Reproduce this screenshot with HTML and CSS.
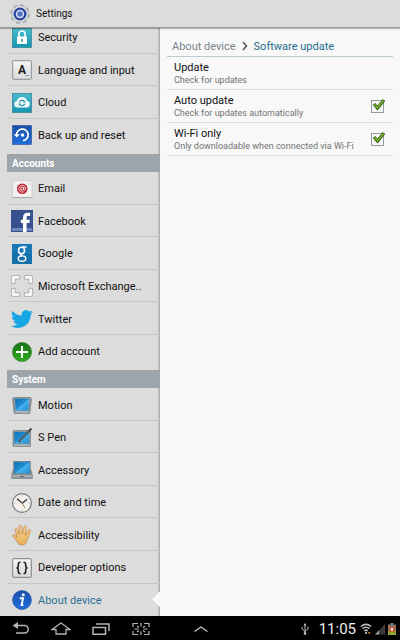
FILE: index.html
```html
<!DOCTYPE html>
<html lang="en">
<head>
    <meta charset="UTF-8">
    <meta name="viewport" content="width=device-width, initial-scale=1.0">
    <title>Settings</title>
    <link rel="stylesheet" href="styles.css">
</head>
<body>
    <!-- shared gradients -->
    <svg class="defs" aria-hidden="true">
        <defs>
            <linearGradient id="teal" x1="0" y1="0" x2="0" y2="1"><stop offset="0" stop-color="#45bccb"/><stop offset="1" stop-color="#1594b2"/></linearGradient>
            <linearGradient id="blue" x1="0" y1="0" x2="0" y2="1"><stop offset="0" stop-color="#1c50ad"/><stop offset="1" stop-color="#1f6ddb"/></linearGradient>
            <linearGradient id="screen" x1="0" y1="0" x2="1" y2="1"><stop offset="0" stop-color="#1272b5"/><stop offset="0.5" stop-color="#208fd4"/><stop offset="0.52" stop-color="#48b2ec"/><stop offset="1" stop-color="#1b8ed6"/></linearGradient>
            <linearGradient id="metal" x1="0" y1="0" x2="0" y2="1"><stop offset="0" stop-color="#f5f5f5"/><stop offset="1" stop-color="#d9dbdc"/></linearGradient>
            <linearGradient id="green" x1="0" y1="0" x2="0" y2="1"><stop offset="0" stop-color="#187012"/><stop offset="1" stop-color="#2fae1e"/></linearGradient>
            <linearGradient id="skin" x1="0" y1="0" x2="0" y2="1"><stop offset="0" stop-color="#f9d58c"/><stop offset="1" stop-color="#e5ad5c"/></linearGradient>
        </defs>
    </svg>

    <header class="title-bar">
        <svg class="icon" viewBox="0 0 22 22">
            <circle cx="11" cy="11" r="8.5" fill="#c9ccd1" stroke="#a2a5aa" stroke-width="2.6" stroke-dasharray="3.6 3.08"/>
            <circle cx="11" cy="11" r="8.3" fill="#dfe1e5" stroke="#b3b6bc" stroke-width=".7"/>
            <circle cx="11" cy="11" r="6.5" fill="#2a439b"/>
            <circle cx="11" cy="11" r="3.5" fill="#5273c2" stroke="#d9e1f5" stroke-width="1.5"/>
        </svg>
        <h1>Settings</h1>
    </header>

    <div class="content">
        <nav class="sidebar">
            <div class="menu">
                <a class="item" href="#security">
                    <svg class="icon" viewBox="0 0 22 22"><rect x="1.5" y="1.5" width="19" height="19" fill="url(#teal)" stroke="#3c8794" stroke-width=".8"/><path d="M8 10V7a3 3 0 0 1 6 0v3" fill="none" stroke="#fff" stroke-width="1.7"/><rect x="6" y="9.5" width="10" height="7.5" rx=".6" fill="#fff"/><path d="M10.3 12h1.4v3h-1.4z" fill="#268b9c"/></svg>
                    Security
                </a>
                <a class="item" href="#language">
                    <svg class="icon" viewBox="0 0 22 22"><rect x="1.7" y="1.7" width="18.6" height="18.6" rx=".8" fill="url(#metal)" stroke="#777" stroke-width=".8"/><text x="11" y="15" class="key-letter">A</text><path d="M14.5 16.500h3.5" stroke="#777" stroke-width=".9" stroke-dasharray="1 .4"/></svg>
                    Language and input
                </a>
                <a class="item" href="#cloud">
                    <svg class="icon" viewBox="0 0 22 22"><rect x="1.5" y="1.5" width="19" height="19" fill="url(#teal)" stroke="#3c8794" stroke-width=".8"/><path d="M6.2 15.5a3.4 3.4 0 0 1-.3-6.7 5.3 5.3 0 0 1 10.2 0 3.4 3.4 0 0 1-.3 6.7z" fill="#eef9fb"/><path d="M8.3 10.3a3 3 0 0 1 5.2-.7M13.8 11.7a3 3 0 0 1-5.2.7" fill="none" stroke="#288fa1" stroke-width="1.1"/><path d="M14.3 8.2v2.3H12zM7.8 13.8v-2.3h2.3z" fill="#288fa1"/></svg>
                    Cloud
                </a>
                <a class="item" href="#backup">
                    <svg class="icon" viewBox="0 0 22 22"><rect x="1.5" y="1.5" width="19" height="19" fill="url(#blue)" stroke="#284d8a" stroke-width=".6"/><path d="M5.6 11.5A5.8 5.8 0 1 1 12 16.6" fill="none" stroke="#fff" stroke-width="1.7"/><path d="M2.7 10.2h6l-3 3.4z" fill="#fff"/><circle cx="11.5" cy="11" r="1.8" fill="#fff"/></svg>
                    Back up and reset
                </a>

                <h2 class="group">Accounts</h2>
                <a class="item" href="#email">
                    <svg class="icon" viewBox="0 0 22 22"><rect x="1.5" y="2.5" width="19.5" height="17" fill="#f3f1ef" stroke="#c7c5c3" stroke-width=".7"/><path d="M1.5 19.5H21" stroke="#a9a9a9"/><path d="M2 3l6 5.8M20.5 3l-6 5.8" stroke="#d3d1cf" stroke-width=".8"/><circle cx="11.2" cy="10.7" r="5.3" fill="#bd2833"/><circle cx="11.2" cy="10.7" r="1.5" fill="none" stroke="#fff" stroke-width=".9"/><path d="M12.8 9v2.5c0 1.500 1.8 1 1.8-.7a3.4 3.4 0 1 0-1.7 2.9" fill="none" stroke="#fff" stroke-width=".7"/></svg>
                    Email
                </a>
                <a class="item" href="#facebook">
                    <svg class="icon" viewBox="0 0 22 22"><path d="M0 0h22v22H0z" fill="#37508f"/><path d="M1 18h20v3H1z" fill="#7186b8"/><path d="M12 22v-9H9.8V9.8H12V7.5c0-3.1 1.7-4.7 4.5-4.7h2.6V6h-1.8c-1.3 0-1.7.6-1.7 1.8v2h3.3l-.5 3.2h-2.8v9z" fill="#fff"/></svg>
                    Facebook
                </a>
                <a class="item" href="#google">
                    <svg class="icon" viewBox="0 0 22 22"><path d="M1 1h20v20H1z" fill="#1878b4"/><path d="M1 11h20v10H1z" fill="#1470a9"/><ellipse cx="10.5" cy="7.5" rx="3" ry="3.2" fill="none" stroke="#fff" stroke-width="1.5"/><path d="M11 4h4.5M11 10.6c-2.3 1-1.8 2 .2 2.8" fill="none" stroke="#fff" stroke-width="1.3"/><ellipse cx="11" cy="15.6" rx="3.8" ry="2.7" fill="none" stroke="#fff" stroke-width="1.4"/></svg>
                    Google
                </a>
                <a class="item" href="#exchange">
                    <svg class="icon" viewBox="0 0 22 22"><path d="M.6.6h8v3.5H4.1v4.5H.6zM13.4.6h8v8h-3.5V4.1h-4.5zM.6 13.4h3.5v4.5h4.5v3.5h-8zM17.9 13.4h3.5v8h-8v-3.5h4.5z" fill="#fafafa" stroke="#999" stroke-width=".7"/></svg>
                    Microsoft Exchange..
                </a>
                <a class="item" href="#twitter">
                    <svg class="icon" viewBox="0 0 24 24"><path d="M23.95 4.57a10 10 0 0 1-2.82.77 4.96 4.96 0 0 0 2.16-2.72c-.95.55-2 .95-3.13 1.18a4.92 4.92 0 0 0-8.38 4.48C7.69 8.1 4.07 6.13 1.64 3.16a4.92 4.92 0 0 0 1.52 6.57 4.9 4.9 0 0 1-2.23-.61v.06c0 2.39 1.7 4.38 3.95 4.83a5 5 0 0 1-2.21.08 4.94 4.94 0 0 0 4.6 3.42A9.87 9.87 0 0 1 0 19.54a13.99 13.99 0 0 0 7.56 2.21c9.05 0 14-7.5 14-13.98 0-.21 0-.42-.02-.63a9.94 9.94 0 0 0 2.46-2.55z" fill="#17a6e4"/></svg>
                    Twitter
                </a>
                <a class="item" href="#add">
                    <svg class="icon" viewBox="0 0 22 22"><circle cx="11" cy="11" r="9.6" fill="url(#green)" stroke="#2b6d25" stroke-width=".6"/><path d="M11 5v12M5 11h12" stroke="#fff" stroke-width="2"/></svg>
                    Add account
                </a>

                <h2 class="group">System</h2>
                <a class="item" href="#motion">
                    <svg class="icon" viewBox="0 0 22 22"><path d="M1.4 4.5l2 14M20.6 4.5l-2 14" stroke="#999" stroke-width="1.2"/><path d="M2.3 3.5h17.4l-1 16H3.3z" fill="#89969e" stroke="#68737a" stroke-width=".6"/><path d="M4 4.7h14l-.8 11.8H4.8z" fill="url(#screen)"/><path d="M4 18h14" stroke="#c7ced1"/></svg>
                    Motion
                </a>
                <a class="item" href="#spen">
                    <svg class="icon" viewBox="0 0 22 22"><rect x="2" y="3.5" width="17.5" height="16" rx=".8" fill="#89969e" stroke="#68737a" stroke-width=".6"/><path d="M3.5 5h14.5v11.5H3.5z" fill="url(#screen)"/><path d="M3 18.2h15.5" stroke="#c7ced1"/><path d="M7.5 15L20.5 1.5" stroke="#444" stroke-width="1.9"/><path d="M8 14.2L18 4" stroke="#9aa" stroke-width=".6"/></svg>
                    S Pen
                </a>
                <a class="item" href="#accessory">
                    <svg class="icon" viewBox="0 0 22 22"><path d="M2 11h18l1.300 5v3.500H.7V16z" fill="#8e9499" stroke="#6f7578" stroke-width=".6"/><path d="M2.2 2H19.800v13.500H2.2z" fill="#708590"/><path d="M3.3 3.1h15.4v11.2H3.3z" fill="url(#screen)"/><path d="M1 17h20" stroke="#b9bec1" stroke-width="1.2"/><path d="M9.5 17.5h3" stroke="#555"/></svg>
                    Accessory
                </a>
                <a class="item" href="#date">
                    <svg class="icon" viewBox="0 0 22 22"><circle cx="11" cy="11" r="9.4" fill="#f3f2ed" stroke="#777d82" stroke-width="1.2"/><path d="M11 3v1.5M11 17.5V19M3 11h1.5M17.5 11H19" stroke="#aaa" stroke-width=".8"/><path d="M6 6.8l5.4 4.4L16 7.3" fill="none" stroke="#333" stroke-width="1.4"/><path d="M10 9.5l4 6.7" stroke="#a98245" stroke-width=".9"/></svg>
                    Date and time
                </a>
                <a class="item" href="#accessibility">
                    <svg class="icon" viewBox="0 0 22 22"><path d="M7.5 19.8C5.7 17 4 14.3 1.8 12.3c-.8-1.1.6-2 1.7-1.2L6.2 13 4.1 6c-.3-1.6 1.6-2 2.2-.6l2 5.1L8 2.7c0-1.7 2.1-1.8 2.4-.2l.9 7.6 1.7-7.3c.4-1.5 2.4-1 2.2.5l-.9 7.9 3-5.2c.8-1.4 2.5-.5 2 .9l-2.5 7.3c-.6 2.3-1.4 4-2.5 5.6-1.6 1.5-5.2 1.7-6.8 0z" fill="url(#skin)" stroke="#b98242" stroke-width=".7"/></svg>
                    Accessibility
                </a>
                <a class="item" href="#developer">
                    <svg class="icon" viewBox="0 0 22 22"><rect x="1.7" y="1.7" width="18.6" height="18.6" rx=".8" fill="url(#metal)" stroke="#666" stroke-width=".8"/><path d="M9.5 5.2Q7.3 5.2 7.3 7.400V9Q7.3 10.800 5.5 11Q7.3 11.200 7.3 13V14.600Q7.3 16.800 9.5 16.800M12.5 5.200Q14.700 5.200 14.700 7.400V9Q14.700 10.800 16.500 11Q14.700 11.200 14.700 13V14.600Q14.700 16.800 12.500 16.800" fill="none" stroke="#222" stroke-width="1.6"/></svg>
                    Developer options
                </a>
                <a class="item selected" href="#about" aria-current="page">
                    <svg class="icon" viewBox="0 0 22 22"><circle cx="11" cy="11" r="9.4" fill="url(#blue)" stroke="#1b55a8" stroke-width=".7"/><circle cx="12.3" cy="5.8" r="1.5" fill="#fff"/><path d="M8.8 9.2h3.3l-1.5 6.9h1.8" fill="none" stroke="#fff" stroke-width="1.9"/></svg>
                    About device
                </a>
            </div>
        </nav>

        <main class="details">
            <div class="breadcrumb">
                <a href="#about">About device</a>
                <svg viewBox="0 0 6 10"><path d="M1 1l3.5 4L1 9" fill="none" stroke="#4d5358" stroke-width="1.5"/></svg>
                <span class="current">Software update</span>
            </div>
            <a class="option" href="#update">
                <span class="text">
                    <span class="name">Update</span>
                    <span class="hint">Check for updates</span>
                </span>
            </a>
            <label class="option">
                <span class="text">
                    <span class="name">Auto update</span>
                    <span class="hint">Check for updates automatically</span>
                </span>
                <span class="check">
                    <input type="checkbox" checked>
                    <svg viewBox="0 0 15 15"><path d="M3 6l3.5 4L13 2" fill="none" stroke="#355f10" stroke-width="3.2"/><path d="M3.5 6.5l3 3.3L12.6 2.5" fill="none" stroke="#7cb832" stroke-width="1.4"/></svg>
                </span>
            </label>
            <label class="option">
                <span class="text">
                    <span class="name">Wi-Fi only</span>
                    <span class="hint">Only downloadable when connected via Wi-Fi</span>
                </span>
                <span class="check">
                    <input type="checkbox" checked>
                    <svg viewBox="0 0 15 15"><path d="M3 6l3.5 4L13 2" fill="none" stroke="#355f10" stroke-width="3.2"/><path d="M3.5 6.5l3 3.3L12.6 2.5" fill="none" stroke="#7cb832" stroke-width="1.4"/></svg>
                </span>
            </label>
        </main>
    </div>

    <footer class="system-bar">
        <div class="keys">
            <button type="button" aria-label="Back"><svg viewBox="0 0 20 16"><path d="M4 4.5h9.5a3.7 3.7 0 0 1 0 7.5H5" fill="none" stroke="#b5b5b5" stroke-width="1.5"/><path d="M7 1v7L1.5 4.5z" fill="#b5b5b5"/></svg></button>
            <button type="button" aria-label="Home"><svg viewBox="0 0 20 16"><path d="M1 8.5L10 2l9 6.5h-4V13H5V8.5z" fill="none" stroke="#b5b5b5" stroke-width="1.3"/></svg></button>
            <button type="button" aria-label="Recent apps"><svg viewBox="0 0 20 16"><path d="M2 6.5h12.5v6.7H2zM5 3h13v7" fill="none" stroke="#b5b5b5" stroke-width="1.5"/></svg></button>
            <button type="button" aria-label="Screenshot"><svg viewBox="0 0 20 16"><path d="M2 6V2.5h5M13 2.5h5V6M2 10v3.500h5M13 13.5h5V10M10 2v3.500M10 10.500V14M3.500 8H7.500M12.5 8h4M6 5l2 1.5M14 5l-2 1.5M6 11l2-1.5M14 11l-2-1.5" fill="none" stroke="#b5b5b5" stroke-width="1.2"/></svg></button>
            <button type="button" aria-label="Open tray"><svg viewBox="0 0 20 16"><path d="M3.5 10.5L10 6l6.5 4.5" fill="none" stroke="#c4c4c4" stroke-width="1.3"/></svg></button>
        </div>
        <div class="status">
            <svg class="usb" viewBox="0 0 8 12"><path d="M4 1.5V10M1 4v2l3 2.5L7 6V3.5" fill="none" stroke="#b9b9b9"/><path d="M4 0l1.5 2.5h-3z" fill="#ccc"/><circle cx="4" cy="10.5" r="1.3" fill="#ccc"/></svg>
            <time>11:05</time>
            <svg viewBox="0 0 12 12"><path d="M.8 3.5Q6-.8 11.2 3.5M2.5 5.7q3.5-2.8 7 0M4.3 7.8q1.7-1.4 3.4 0" fill="none" stroke="#b7b7b7" stroke-width="1.5"/><circle cx="6" cy="10" r="1.1" fill="#ccc"/><path d="M8 9h2.5L9.2 11.5z" fill="#bd8234"/></svg>
            <svg viewBox="0 0 12 12"><path d="M1 11.5h10V1z" fill="#414141"/><path d="M1 11.5h4V7.3z" fill="#999"/><path d="M7 5v6.5M9 3v8.5" stroke="#222" stroke-width=".7"/></svg>
            <svg class="battery" viewBox="0 0 8 12"><path d="M2.5 0h3v1.5H8V12H0V1.5h2.5z" fill="#777"/><path d="M0 7.5h8V12H0z" fill="#7fb52c"/><path d="M1 9.5l6-6M1 3.5l6 6" stroke="#d8542e" stroke-width="2"/><path d="M3 5h2v2.5H3z" fill="#f2e5d8"/></svg>
        </div>
    </footer>
</body>
</html>
```

FILE: styles.css
```css
* {
    box-sizing: border-box;
}
body {
    display: flex;
    flex-direction: column;
    min-height: 100vh;
    margin: 0;
    font-family: Roboto, "Liberation Sans", sans-serif;
    font-size: 11px;
    color: #111;
    background-color: #f8f8f8;
}
a {
    color: inherit;
    text-decoration: none;
}
h1, h2 {
    margin: 0;
}
svg {
    display: block;
    flex: none;
}
.defs {
    position: absolute;
    width: 0;
    height: 0;
}
.icon {
    width: 22px;
    height: 22px;
}

/* top bar */
.title-bar {
    display: flex;
    align-items: center;
    gap: 5px;
    height: 28px;
    padding: 0 9px;
    background-color: #dcdcdc;
    border-bottom: 1px solid #999;
    box-shadow: 0 1px 1px rgba(0, 0, 0, 0.25);
    z-index: 1;
}
.title-bar h1 {
    font-size: 10px;
    font-weight: normal;
}

/* two panes */
.content {
    display: flex;
    flex: 1;
}
.sidebar {
    display: flex;
    width: 40%;
    overflow: hidden;
    background-color: #dcdcdc;
    box-shadow: inset -2px 0 2px -1px rgba(0, 0, 0, 0.3);
}
/* list is scrolled a little under the top bar */
.menu {
    display: flex;
    flex-direction: column;
    flex: 1;
    margin-top: -7px;
    padding-left: 7px;
}
.item {
    position: relative;
    display: flex;
    flex: 1 0 32px;
    align-items: center;
    gap: 5px;
    padding: 2px 0 0 4px;
    white-space: nowrap;
    border-bottom: 1px solid #c6c6c6;
}
.group {
    height: 18px;
    margin-top: 3px;
    padding-left: 5px;
    font-size: 10px;
    line-height: 19px;
    color: #fff;
    background-color: #9ca5ab;
}
.item:has(+ .group), .item:last-child {
    border-bottom-color: transparent;
}
.selected {
    color: #2a7192;
}
.selected::after {
    content: "";
    position: absolute;
    top: 50%;
    right: 0;
    width: 8px;
    height: 16px;
    margin-top: -8px;
    background-color: #f8f8f8;
    clip-path: polygon(100% 0, 0 50%, 100% 100%);
}
.key-letter {
    font-size: 12px;
    font-weight: bold;
    text-anchor: middle;
    fill: #222;
}

/* right pane */
.details {
    flex: 1;
    padding: 8px 7px;
}
.breadcrumb {
    display: flex;
    align-items: center;
    gap: 6px;
    height: 21px;
    padding-left: 5px;
    color: #7b858c;
    border-bottom: 1px solid #bccbd2;
}
.breadcrumb svg {
    width: 6px;
    height: 10px;
}
.breadcrumb .current {
    color: #1f6d8f;
}
.option {
    display: flex;
    align-items: center;
    height: 33px;
    padding: 0 7px;
    border-bottom: 1px solid #dedede;
}
.text {
    flex: 1;
}
.name, .hint {
    display: block;
}
.name {
    line-height: 14px;
}
.hint {
    font-size: 9px;
    line-height: 11px;
    color: #737373;
}
.check {
    position: relative;
}
.check input {
    display: block;
    width: 13px;
    height: 13px;
    margin: 0 2px 0 0;
    appearance: none;
    background-color: #f3f5f6;
    border: 1px solid #8f9ca3;
}
.check svg {
    position: absolute;
    top: -2px;
    left: 0;
    width: 15px;
    height: 15px;
    pointer-events: none;
}
.check input:not(:checked) + svg {
    display: none;
}

/* bottom bar */
.system-bar {
    display: flex;
    align-items: center;
    justify-content: space-between;
    height: 24px;
    padding: 1px 4px 0 11px;
    background-color: #000;
}
.keys {
    display: flex;
    gap: 20px;
}
.keys button {
    padding: 0;
    background: none;
    border: none;
    cursor: pointer;
}
.keys button:last-child {
    margin-left: 20px;
}
.keys svg {
    width: 20px;
    height: 16px;
}
.status {
    display: flex;
    align-items: center;
    gap: 2px;
}
.status svg {
    width: 12px;
    height: 12px;
}
.status .usb {
    width: 8px;
    margin-right: 8px;
}
.status .battery {
    width: 8px;
}
.status time {
    margin-right: 2px;
    font-size: 15px;
    color: #eee;
}
```
